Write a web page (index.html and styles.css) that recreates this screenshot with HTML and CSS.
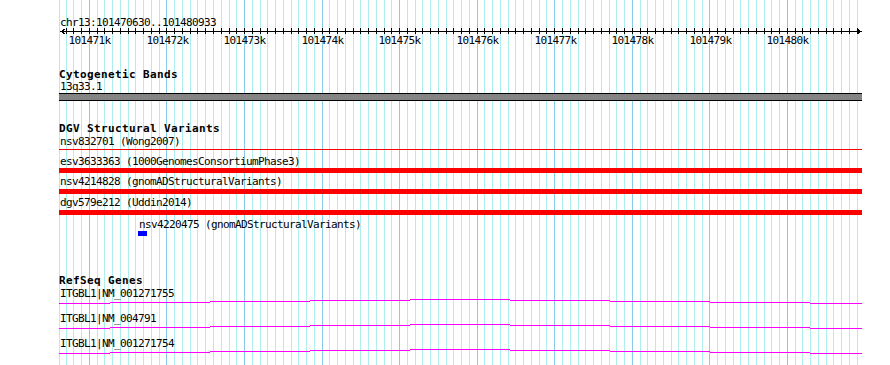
FILE: index.html
```html
<!DOCTYPE html>
<html lang="en">
<head>
  <meta charset="UTF-8">
  <title>chr13:101470630..101480933</title>
  <link rel="stylesheet" href="styles.css">
</head>
<body>

<div class="panel">
  <svg class="grid" id="grid" width="803" height="365"></svg>

  <div class="content">
    <div class="coords">chr13:101470630..101480933</div>
    <svg class="ruler" id="ruler" width="803" height="24">
      <line class="axis" x1="2" y1="5.5" x2="802" y2="5.5" />
      <polyline class="arrow" points="6,3 2,5.5 6,8" />
      <polyline class="arrow" points="798,3 802,5.5 798,8" />
      <g id="ticks"></g>
      <text x="30.5" y="18">101471k</text>
      <text x="108.5" y="18">101472k</text>
      <text x="185.5" y="18">101473k</text>
      <text x="263.5" y="18">101474k</text>
      <text x="340.5" y="18">101475k</text>
      <text x="418.5" y="18">101476k</text>
      <text x="496.5" y="18">101477k</text>
      <text x="573.5" y="18">101478k</text>
      <text x="651.5" y="18">101479k</text>
      <text x="728.5" y="18">101480k</text>
    </svg>

    <div class="track cyto">
      <div class="track-title">Cytogenetic Bands</div>
      <div class="label">13q33.1</div>
      <div class="band"></div>
    </div>

    <div class="track dgv">
      <div class="track-title">DGV Structural Variants</div>
      <div class="feature first">
        <div class="label">nsv832701 (Wong2007)</div>
        <div class="hairline"></div>
      </div>
      <div class="feature second">
        <div class="label">esv3633363 (1000GenomesConsortiumPhase3)</div>
        <div class="bar"></div>
      </div>
      <div class="feature">
        <div class="label">nsv4214828 (gnomADStructuralVariants)</div>
        <div class="bar"></div>
      </div>
      <div class="feature">
        <div class="label">dgv579e212 (Uddin2014)</div>
        <div class="bar"></div>
      </div>
      <div class="feature small" style="margin-left: 79px">
        <div class="label">nsv4220475 (gnomADStructuralVariants)</div>
        <div class="box"></div>
      </div>
    </div>

    <div class="track genes">
      <div class="track-title">RefSeq Genes</div>
      <div class="gene">
        <div class="label">ITGBL1|NM_001271755</div>
        <svg class="model" width="803" height="12"></svg>
      </div>
      <div class="gene">
        <div class="label">ITGBL1|NM_004791</div>
        <svg class="model" width="803" height="12"></svg>
      </div>
      <div class="gene">
        <div class="label">ITGBL1|NM_001271754</div>
        <svg class="model" width="803" height="12"></svg>
      </div>
    </div>
  </div>
</div>

<script src="script.js"></script>
</body>
</html>
```

FILE: styles.css
```css
* {
  box-sizing: border-box;
}
body {
  margin: 0;
  background: #fff;
  color: #000;
  font-family: "DejaVu Sans Mono", "Liberation Mono", monospace;
  font-size: 11px;
  letter-spacing: -0.62px;
}
.panel {
  position: relative;
  width: 803px;
  height: 365px;
  margin-left: 59px;
  overflow: hidden;
}
.grid {
  position: absolute;
  top: 0;
  left: 0;
}
.grid line {
  stroke: #afeeee;
  stroke-width: 1;
  shape-rendering: crispEdges;
}
.grid line.major {
  stroke: #87cdea;
}
.content {
  position: relative;
}
.label {
  line-height: 13px;
  height: 13px;
  padding-left: 1px;
  white-space: nowrap;
}
.coords {
  padding-top: 16px;
  padding-left: 1px;
  line-height: 13px;
}
.ruler {
  display: block;
  margin-top: -3px;
}
.ruler line,
.ruler polyline {
  stroke: #000;
  stroke-width: 1;
  fill: none;
  shape-rendering: crispEdges;
}
.ruler text {
  font-family: "DejaVu Sans Mono", monospace;
  font-size: 11px;
  letter-spacing: -0.62px;
  text-anchor: middle;
  fill: #000;
}
.track-title {
  font-weight: bold;
  letter-spacing: 0.38px;
  line-height: 13px;
  height: 13px;
}
.cyto {
  margin-top: 18px;
}
.cyto .label {
  margin-top: -1px;
}
.band {
  height: 8px;
  background: #848484;
  border-top: 1px solid #000;
  border-bottom: 1px solid #000;
}
.dgv {
  margin-top: 21px;
}
.feature {
  margin-top: 2px;
}
.feature.first {
  margin-top: 0;
}
.feature.second {
  margin-top: 5px;
}
.feature.small {
  margin-top: 3px;
}
.hairline {
  height: 1px;
  margin-top: 1px;
  background: #f00;
}
.bar {
  height: 5px;
  margin-top: 1px;
  background: #f00;
}
.feature.second .bar {
  margin-top: 0;
}
.box {
  width: 9px;
  height: 5px;
  background: #00f;
}
.genes {
  margin-top: 39px;
}
.genes .track-title {
  line-height: 11px;
  height: 11px;
}
.gene {
  margin-top: 2px;
}
.gene .label {
  line-height: 11px;
  height: 11px;
}
.model {
  display: block;
}
.model path {
  stroke: #f0f;
  stroke-width: 1;
  fill: none;
  shape-rendering: crispEdges;
}
```

FILE: script.js
```js
const SVG_NS = "http://www.w3.org/2000/svg";

// panel x for a base position (101471k sits on x=30)
function toX(pos) {
  return Math.floor(30.4 + (pos - 101471000) * 0.077556);
}

function addLine(parent, x1, y1, x2, y2, cls) {
  const line = document.createElementNS(SVG_NS, "line");
  line.setAttribute("x1", x1);
  line.setAttribute("y1", y1);
  line.setAttribute("x2", x2);
  line.setAttribute("y2", y2);
  if (cls) line.setAttribute("class", cls);
  parent.appendChild(line);
}

const grid = document.getElementById("grid");
const ticks = document.getElementById("ticks");
const majors = [];

addLine(grid, 0.5, 0, 0.5, 365);
for (let pos = 101470700; pos <= 101480900; pos += 100) {
  const x = toX(pos) + 0.5;
  if (pos % 1000 === 0) {
    majors.push(x);
  } else {
    addLine(grid, x, 0, x, 365);
  }
  addLine(ticks, x, 2, x, 8);
}
// major lines go on top of the minor ones
majors.forEach(x => addLine(grid, x, 0, x, 365, "major"));

// intron "hat" across the whole view: one pixel step every 100px
const steps = [[0, 4], [51, 3], [151, 2], [251, 1], [351, 0], [451, 1], [551, 2], [651, 3], [751, 4], [803, 4]];
let d = "";
for (let i = 0; i < steps.length - 1; i++) {
  const y = steps[i][1] + 0.5;
  d += `M${steps[i][0]} ${y}H${steps[i + 1][0]}`;
}
document.querySelectorAll(".model").forEach(svg => {
  const path = document.createElementNS(SVG_NS, "path");
  path.setAttribute("d", d);
  svg.appendChild(path);
});
```
